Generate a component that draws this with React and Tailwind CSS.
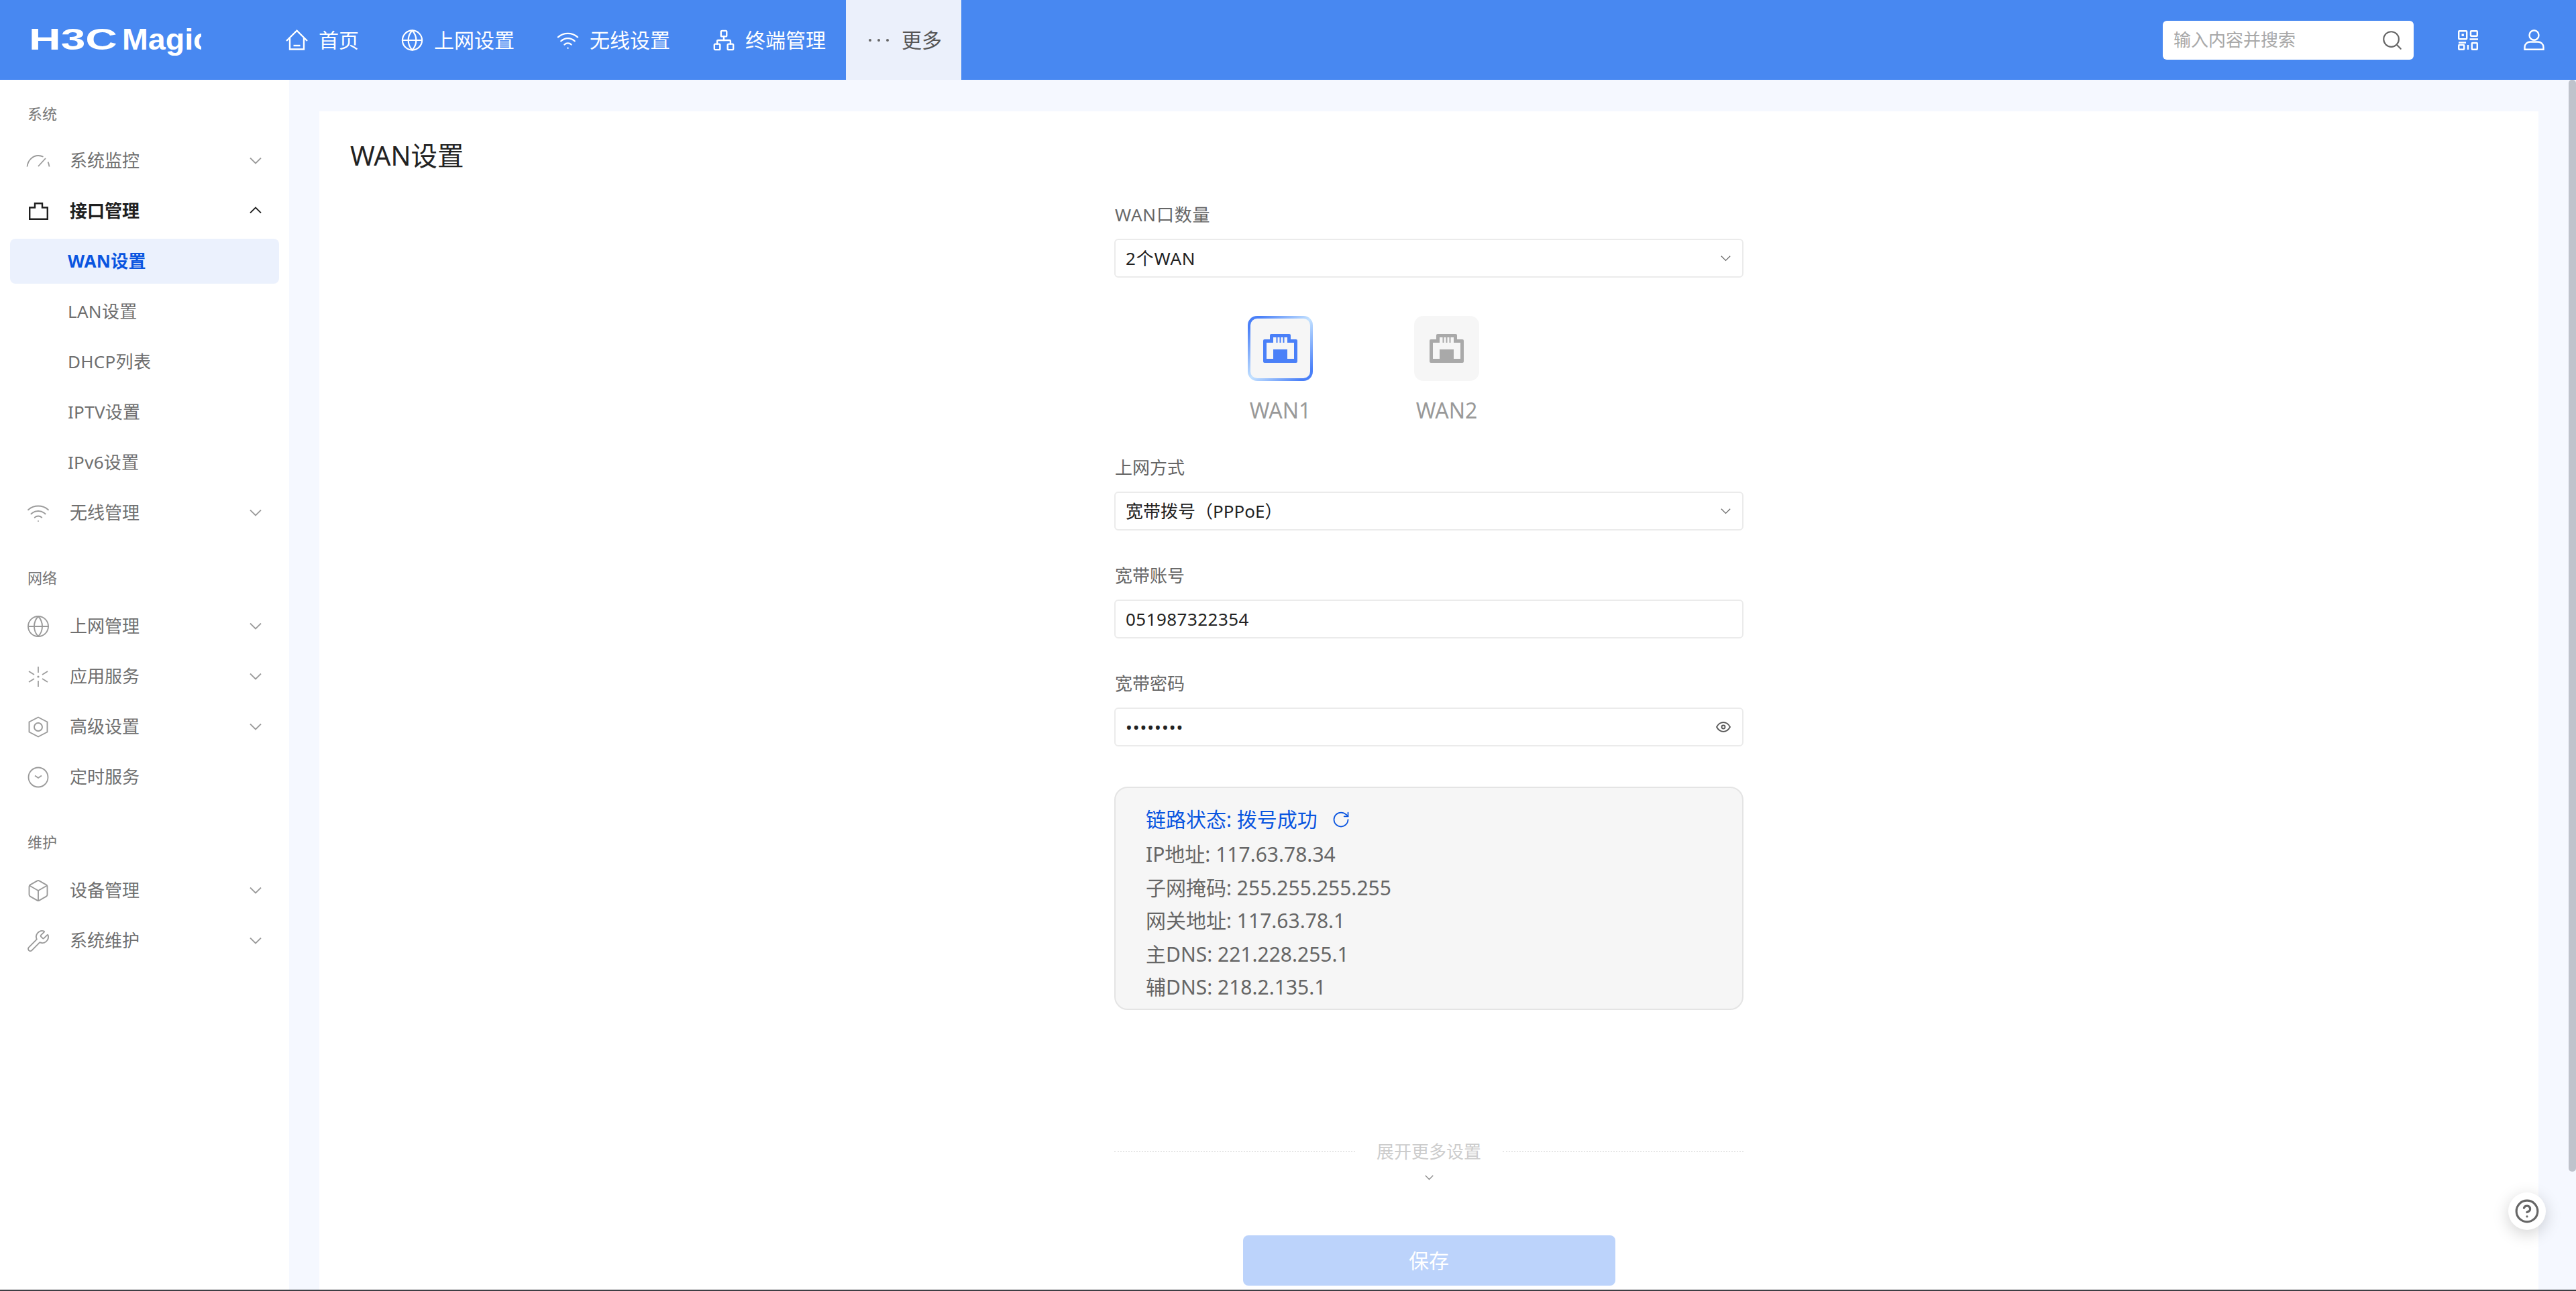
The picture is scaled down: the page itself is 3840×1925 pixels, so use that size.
import { Globe, Wifi, Network, Search, Box, Wrench, RotateCw, CircleHelp } from "lucide-react";

const FONT = "font-['Noto_Sans','Noto_Sans_CJK_SC',sans-serif]";

function Chevron({ up, className, sw = 1.8 }) {
  return (
    <svg width="18" height="10" viewBox="0 0 18 10" fill="none" stroke="currentColor" strokeWidth={sw} className={className}>
      <polyline points={up ? "1,9.5 9,1.5 17,9.5" : "1,0.5 9,8.5 17,0.5"} />
    </svg>
  );
}

function Gauge() {
  return (
    <svg width="36" height="20" viewBox="0 0 36 20" fill="none" stroke="currentColor" strokeWidth="1.8">
      <path d="M1.5 18.5C2.5 9 10 2 18 2c3 0 5.500.8 7.500 1.800" />
      <path d="M18 18L29 6" />
      <path d="M32.500 11.500c1 2 1.700 4.500 2 7" />
    </svg>
  );
}

function Port() {
  return (
    <svg width="29" height="26" viewBox="0 0 29 26" fill="none" stroke="currentColor" strokeWidth="2.4">
      <path d="M1.200 24.800V7.500H9V1.200h11v6.300h7.800v17.300z" />
    </svg>
  );
}

function Spark() {
  return (
    <svg width="32" height="32" viewBox="0 0 32 32" fill="none" stroke="currentColor" strokeWidth="1.7">
      <circle cx="16" cy="16" r="1.6" fill="currentColor" stroke="none" />
      <path d="M16 1v9M16 22v9M2 8l8 5M22 19l8 5M2 24l8-5M22 13l8-5M1 16h0" />
    </svg>
  );
}

function Nut() {
  return (
    <svg width="30" height="32" viewBox="0 0 30 32" fill="none" stroke="currentColor" strokeWidth="1.9">
      <path d="M15 1.500L28.500 8.500v15L15 30.500 1.500 23.500v-15z" />
      <circle cx="15" cy="16" r="6" />
    </svg>
  );
}

function ClockDown() {
  return (
    <svg width="32" height="32" viewBox="0 0 32 32" fill="none" stroke="currentColor" strokeWidth="1.8">
      <circle cx="16" cy="16" r="14.500" />
      <polyline points="11,13.500 16,17 21,13.500" />
    </svg>
  );
}

function thin(Icon, size = 36) {
  return <Icon size={size} strokeWidth={1.25} />;
}

const sections = [
  {
    title: "系统",
    rows: [
      { label: "系统监控", icon: <Gauge />, chevron: true },
      { label: "接口管理", icon: <Port />, chevron: true, open: true },
      { label: "WAN设置", sub: true, active: true },
      { label: "LAN设置", sub: true },
      { label: "DHCP列表", sub: true },
      { label: "IPTV设置", sub: true },
      { label: "IPv6设置", sub: true },
      { label: "无线管理", icon: thin(Wifi), chevron: true },
    ],
  },
  {
    title: "网络",
    rows: [
      { label: "上网管理", icon: thin(Globe), chevron: true },
      { label: "应用服务", icon: <Spark />, chevron: true },
      { label: "高级设置", icon: <Nut />, chevron: true },
      { label: "定时服务", icon: <ClockDown /> },
    ],
  },
  {
    title: "维护",
    rows: [
      { label: "设备管理", icon: thin(Box), chevron: true },
      { label: "系统维护", icon: thin(Wrench), chevron: true },
    ],
  },
];

function SideRow({ row }) {
  if (row.sub) {
    return (
      <div
        className={`h-[67px] flex items-center pl-[86px] rounded-lg text-[26px] tracking-[0.3px] ${
          row.active ? "bg-[#ebf1fd] text-[#0a55e0] font-bold" : "text-[#6f6f6f]"
        }`}
      >
        {row.label}
      </div>
    );
  }
  return (
    <div className={`h-[67px] flex items-center pl-[24px] pr-[26px] text-[26px] ${row.open ? "text-[#1f1f1f] font-bold" : "text-[#6f6f6f]"}`}>
      <span className={`w-[36px] flex justify-center shrink-0 ${row.open ? "text-[#1f1f1f]" : "text-[#9a9a9a]"}`}>{row.icon}</span>
      <span className="ml-[29px]">{row.label}</span>
      {row.chevron && <Chevron up={row.open} className={`ml-auto ${row.open ? "text-[#1f1f1f] -mt-[3px]" : "text-[#999999]"}`} />}
    </div>
  );
}

function Sidebar() {
  return (
    <aside className="w-[431px] shrink-0 bg-white pt-[35px] px-[15px]">
      {sections.map((s, i) => (
        <div key={s.title} className={i > 0 ? "mt-[48px]" : ""}>
          <div className={`h-[30px] leading-[30px] pl-[26px] text-[22px] text-[#777777] ${i > 0 ? "mb-[24px]" : "mb-[22px]"}`}>{s.title}</div>
          <div className="flex flex-col gap-[8px]">
            {s.rows.map((r) => (
              <SideRow key={r.label} row={r} />
            ))}
          </div>
        </div>
      ))}
    </aside>
  );
}

function HomeIcon() {
  return (
    <svg width="33" height="31" viewBox="0 0 33 31" fill="none" stroke="currentColor" strokeWidth="2.4">
      <path d="M1 17L16.500 1.700 32 17" />
      <path d="M6 13v16.500h21V13" />
      <path d="M11.500 24h10" />
    </svg>
  );
}

function QrIcon() {
  return (
    <svg width="30" height="30" viewBox="0 0 30 30" fill="none" stroke="currentColor" strokeWidth="2.4">
      <rect x="1.200" y="1.200" width="12" height="12" rx="1" />
      <rect x="5.500" y="5.500" width="3.400" height="3.400" fill="currentColor" stroke="none" />
      <rect x="19" y="1.200" width="9.800" height="7.500" rx="1" />
      <path d="M17.500 13.500H30M1 18.500h11" />
      <rect x="1.200" y="22" width="8" height="6.800" rx="1" />
      <rect x="20.800" y="19" width="8" height="9.800" rx="1" />
      <path d="M15 22v7" />
    </svg>
  );
}

function UserIcon() {
  return (
    <svg width="31" height="31" viewBox="0 0 31 31" fill="none" stroke="currentColor" strokeWidth="2.4">
      <ellipse cx="15.500" cy="8.500" rx="7" ry="7.300" />
      <path d="M1.500 29.800v-3.300c0-5 4-8 8-8h12c4 0 8 3 8 8v3.300z" />
    </svg>
  );
}

const navItems = [
  { label: "首页", icon: <HomeIcon /> },
  { label: "上网设置", icon: <Globe size={38} strokeWidth={1.5} /> },
  { label: "无线设置", icon: <Wifi size={38} strokeWidth={1.6} /> },
  { label: "终端管理", icon: <Network size={34} strokeWidth={1.7} /> },
];

function Header() {
  return (
    <header className="h-[119px] shrink-0 bg-[#4888f1] flex items-center text-white">
      <svg width="254" height="50" viewBox="0 0 254 50" className="ml-[46px] mt-[6px] shrink-0" fill="white">
        <text x="-3" y="35.500" textLength="132" lengthAdjust="spacingAndGlyphs" fontSize="44" fontWeight="700" className="font-['Liberation_Sans']">
          H3C
        </text>
        <text x="136" y="35.500" textLength="132" lengthAdjust="spacingAndGlyphs" fontSize="44" fontWeight="700" className="font-['Liberation_Sans']">
          Magic
        </text>
      </svg>
      <nav className="ml-[95px] flex h-full text-[30px]">
        {navItems.map((n) => (
          <div key={n.label} className="flex items-center px-[30px] mr-[2px] gap-[15px]">
            <span className="w-[35px] flex justify-center">{n.icon}</span>
            {n.label}
          </div>
        ))}
        <div className="-ml-[2px] w-[172px] bg-[#ebf0fb] text-[#555555] flex items-center pl-[34px] gap-[19px]">
          <span className="flex gap-[9px] w-[30px]">
            <i className="size-[4px] rounded-full bg-[#666666]" />
            <i className="size-[4px] rounded-full bg-[#666666]" />
            <i className="size-[4px] rounded-full bg-[#666666]" />
          </span>
          更多
        </div>
      </nav>
      <div className="ml-auto flex items-center pr-[47px]">
        <div className="w-[374px] h-[58px] bg-white rounded-md flex items-center pl-[16px] pr-[15px] text-[26px] text-[#a8a8a8]">
          输入内容并搜索
          <Search size={34} strokeWidth={1.5} className="ml-auto text-[#666666]" />
        </div>
        <span className="ml-[66px]"><QrIcon /></span>
        <span className="ml-[68px]"><UserIcon /></span>
      </div>
    </header>
  );
}

function PortIcon({ className }) {
  return (
    <svg width="51" height="43" viewBox="0 0 51 43" className={className}>
      <path
        fill="currentColor"
        fillRule="evenodd"
        d="M12 0h27a2 2 0 0 1 2 2v6h8a2 2 0 0 1 2 2v31a2 2 0 0 1-2 2H2a2 2 0 0 1-2-2V10a2 2 0 0 1 2-2h8V2a2 2 0 0 1 2-2zM15 5v8H5v24h10V23h21v14h10V13H36V5z"
      />
      <path stroke="currentColor" strokeWidth="2" d="M20.500 5v8M25.500 5v8M30.500 5v8" />
    </svg>
  );
}

function WanTile({ label, active }) {
  return (
    <div className="w-[97px] flex flex-col items-center">
      {active ? (
        <div className="size-[97px] rounded-[14px] p-[4px] bg-[linear-gradient(135deg,#4a80f8_10%,#c4e2ff_50%,#4a80f8_90%)]">
          <div className="size-full rounded-[10px] bg-[#f6f6f6] flex items-center justify-center">
            <PortIcon className="text-[#4a80f8]" />
          </div>
        </div>
      ) : (
        <div className="size-[97px] rounded-[14px] bg-[#f6f6f6] flex items-center justify-center">
          <PortIcon className="text-[#a9a9a9]" />
        </div>
      )}
      <div className="mt-[24px] h-[40px] leading-[40px] text-[32px] text-[#999999] whitespace-nowrap">{label}</div>
    </div>
  );
}

function Field({ label, className, labelClass = "", children }) {
  return (
    <div className={className}>
      <div className={`h-[34px] leading-[34px] pl-[1px] text-[26px] text-[#666666] ${labelClass}`}>{label}</div>
      <div className="mt-[19px] h-[58px] border-2 border-[#ebebeb] rounded-md bg-white flex items-center pl-[15px] pr-[17px] text-[26px] text-[#222222]">
        {children}
      </div>
    </div>
  );
}

function EyeIcon() {
  return (
    <svg width="22" height="16" viewBox="0 0 22 16" fill="none" stroke="#555555" strokeWidth="1.8">
      <path d="M1 8c2.500-4.500 6-6.800 10-6.800S18.500 3.500 21 8c-2.500 4.500-6 6.800-10 6.800S3.500 12.500 1 8z" />
      <circle cx="11" cy="8" r="2.500" />
    </svg>
  );
}

const linkInfo = ["IP地址: 117.63.78.34", "子网掩码: 255.255.255.255", "网关地址: 117.63.78.1", "主DNS: 221.228.255.1", "辅DNS: 218.2.135.1"];

export default function App() {
  return (
    <div className={`h-screen flex flex-col overflow-hidden ${FONT}`}>
      <Header />
      <div className="flex flex-1 min-h-0">
        <Sidebar />
        <main className="flex-1 flex bg-[#f5f8ff] min-w-0">
          <div className="flex-1 pl-[45px] pr-[45px] pt-[47px] min-w-0">
            <div className="h-full bg-white overflow-hidden relative">
              <h1 className="mt-[45px] ml-[46px] h-[42px] leading-[42px] text-[39.500px] text-[#222222]">WAN设置</h1>
              <div className="w-[938px] mx-auto mt-[50px]">
                <Field label="WAN口数量" labelClass="tracking-[0.8px]">
                  <span className="tracking-[0.8px]">2个WAN</span>
                  <Chevron sw={1.5} className="ml-auto w-[15px] h-[9px] text-[#666666]" />
                </Field>
                <div className="mt-[57px] ml-[199px] flex gap-[151px]">
                  <WanTile label="WAN1" active />
                  <WanTile label="WAN2" />
                </div>
                <Field label="上网方式" className="mt-[48px]">
                  宽带拨号（PPPoE）
                  <Chevron sw={1.5} className="ml-auto w-[15px] h-[9px] text-[#666666]" />
                </Field>
                <Field label="宽带账号" className="mt-[50px]">
                  <span className="tracking-[0.45px]">051987322354</span>
                </Field>
                <Field label="宽带密码" className="mt-[50px]">
                  <span className="tracking-[1px]">••••••••</span>
                  <span className="ml-auto"><EyeIcon /></span>
                </Field>
                <div className="mt-[60px] h-[333px] rounded-[20px] border-2 border-[#e4e4e4] bg-[#f6f6f6] pt-[22px] pl-[45px] text-[30px] text-[#666666]">
                  <div className="h-[50px] leading-[50px] flex items-center text-[#0a55e0]">
                    链路状态: 拨号成功
                    <RotateCw size={28} strokeWidth={1.5} className="ml-[21px]" />
                  </div>
                  <div className="mt-[2px]">
                    {linkInfo.map((t) => (
                      <div key={t} className="h-[49.5px] leading-[49.5px]">{t}</div>
                    ))}
                  </div>
                </div>
                <div className="mt-[191px] h-[40px] flex items-center text-[26px] text-[#cccccc]">
                  <div className="flex-1 border-t-2 border-dotted border-[#e6e6e6]" />
                  <span className="mx-[32px]">展开更多设置</span>
                  <div className="flex-1 border-t-2 border-dotted border-[#e6e6e6]" />
                </div>
                <div className="mt-[15px] flex justify-center">
                  <Chevron className="w-[13px] h-[8px] text-[#888888]" />
                </div>
                <button className="block mx-auto mt-[82px] w-[555px] h-[75px] rounded-lg bg-[#bcd3fb] text-white text-[30px]">保存</button>
              </div>
            </div>
          </div>
          <div className="w-[11px] shrink-0">
            <div className="h-[1628px] rounded-[5px] bg-[#bfc3cc]" />
          </div>
        </main>
      </div>
      <div className="h-[2px] shrink-0 bg-[#3c3f44]" />
      <div className="absolute left-[3739px] top-[1778px] size-[56px] rounded-full bg-white shadow-[0_6px_24px_rgba(0,0,0,0.18)] flex items-center justify-center text-[#666666]">
        <CircleHelp size={38} strokeWidth={2} />
      </div>
    </div>
  );
}
